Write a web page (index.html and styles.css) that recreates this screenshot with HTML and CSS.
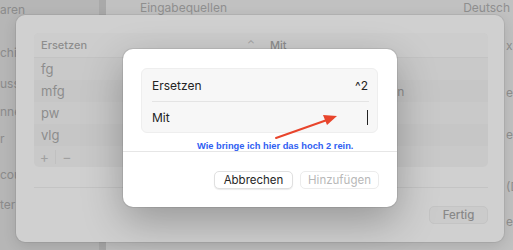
FILE: index.html
```html
<!DOCTYPE html>
<html lang="de">
<head>
    <meta charset="UTF-8">
    <title>Textersetzungen</title>
    <link rel="stylesheet" href="styles.css">
</head>
<body>
    <div class="window">
        <div class="sidebar">
            <p class="s1">aren</p>
            <p class="s2">chi</p>
            <p class="s3">uss</p>
            <p class="s4">nne</p>
            <p class="s5">r</p>
            <p class="s6">cou</p>
            <p class="s7">ter</p>
        </div>
        <div class="content">
            <div class="topline">
                <span>Eingabequellen</span>
                <span>Deutsch</span>
            </div>
            <div class="edge">
                <p class="e1">x</p>
                <p class="e2">en</p>
                <p class="e3">er</p>
                <p class="e4">(D</p>
                <p class="e5">er</p>
            </div>
        </div>
    </div>

    <div class="sheet">
        <div class="table">
            <div class="thead">
                <div class="col1">Ersetzen <span class="sort">&#8963;</span></div>
                <div class="col2">Mit</div>
            </div>
            <div class="row"><div class="col1">fg</div><div class="col2">Freundliche Grüße</div></div>
            <div class="row odd"><div class="col1">mfg</div><div class="col2">Mit freundlichen Grüßen</div></div>
            <div class="row"><div class="col1">pw</div><div class="col2">Passwort</div></div>
            <div class="row odd"><div class="col1">vlg</div><div class="col2">Viele Grüße</div></div>
            <div class="tfoot">
                <span class="tool">+</span>
                <span class="tool minus">&minus;</span>
            </div>
        </div>
        <div class="sheet-actions">
            <button class="btn dim">Fertig</button>
        </div>
    </div>

    <div class="dialog">
        <div class="fields">
            <div class="field">
                <span>Ersetzen</span>
                <span>^2</span>
            </div>
            <div class="field">
                <span>Mit</span>
                <span class="caret"></span>
            </div>
        </div>
        <div class="note">Wie bringe ich hier das hoch 2 rein.</div>
        <div class="actions">
            <button class="btn">Abbrechen</button>
            <button class="btn off">Hinzufügen</button>
        </div>
    </div>

    <svg class="arrow" width="513" height="250" viewBox="0 0 513 250">
        <line x1="276" y1="138" x2="327" y2="120" stroke="#e8452c" stroke-width="2" stroke-linecap="round" />
        <polygon points="337,116 323,115 327,125" fill="#e8452c" />
    </svg>
</body>
</html>
```

FILE: styles.css
```css
* {
    padding: 0;
    margin: 0;
    box-sizing: border-box;
}

body {
    width: 513px;
    height: 250px;
    overflow: hidden;
    position: relative;
    background-color: #bdbdbd;
    font-family: Inter, "Liberation Sans", sans-serif;
}

/* Fenster dahinter */

.window {
    display: grid;
    grid-template-columns: 106px 1fr;
    height: 250px;
}

.sidebar {
    background-color: #b6b6b6;
    border-right: 7px solid #a9a9a9;
    color: #8b8b8b;
    font-size: 12px;
}

.sidebar p {
    line-height: 14px;
}

.s1 { margin-top: 3px; }
.s2 { margin-top: 29px; }
.s3 { margin-top: 17px; }
.s4 { margin-top: 14px; }
.s5 { margin-top: 13px; }
.s6 { margin-top: 22px; }
.s7 { margin-top: 16px; }

.content {
    position: relative;
    background-color: #c1c1c1;
    color: #8f8f8f;
    font-size: 12px;
}

.topline {
    display: flex;
    justify-content: space-between;
    padding: 1px 3px 0 34px;
    line-height: 14px;
}

.edge {
    display: flex;
    flex-direction: column;
    align-items: flex-end;
}

.edge p {
    line-height: 14px;
    width: 7px;
    overflow: hidden;
    white-space: nowrap;
}

.e1 { margin-top: 24px; }
.e2 { margin-top: 33px; }
.e3 { margin-top: 28px; }
.e4 { margin-top: 38px; }
.e5 { margin-top: 21px; }

/* Sheet */

.sheet {
    position: absolute;
    left: 16px;
    top: 15px;
    width: 488px;
    height: 227px;
    background-color: #d0d0d0;
    border-radius: 9px;
    box-shadow: 0 0 0 1px rgba(0, 0, 0, 0.06), 0 4px 14px rgba(0, 0, 0, 0.12);
    padding: 18px 16px 0 18px;
    color: #8d8d8d;
}

.table {
    background-color: #c9c9c9;
    border-radius: 5px;
    height: 134px;
    overflow: hidden;
}

.thead,
.row {
    display: flex;
    align-items: center;
}

.thead {
    height: 25px;
    background-color: #cdcdcd;
    font-size: 11px;
    font-weight: 500;
    border-bottom: 1px solid #c3c3c3;
}

.row {
    height: 22px;
    font-size: 13px;
}

.row .col2 {
    font-size: 12px;
    letter-spacing: -0.15px;
}

.row.odd {
    background-color: #c6c6c6;
}

.col1 {
    width: 229px;
    padding-left: 7px;
    display: flex;
    justify-content: space-between;
    padding-right: 8px;
}

.col2 {
    padding-left: 7px;
}

.sort {
    font-size: 10px;
    color: #a2a2a2;
}

.tfoot {
    display: flex;
    height: 21px;
    align-items: center;
    font-size: 14px;
    color: #a0a0a0;
}

.tool {
    width: 22px;
    text-align: center;
    border-right: 1px solid #c0c0c0;
    line-height: 14px;
}

.minus {
    border-right: none;
}

.sheet-actions {
    margin-top: 20px;
    border-top: 1px solid #c4c4c4;
    padding-top: 18px;
    display: flex;
    justify-content: flex-end;
}

/* Dialog */

.dialog {
    position: absolute;
    left: 123px;
    top: 49px;
    width: 274px;
    height: 158px;
    background-color: #ffffff;
    border-radius: 10px;
    box-shadow: 0 0 0 1px rgba(0, 0, 0, 0.08), 0 14px 40px rgba(0, 0, 0, 0.28);
    padding-top: 19px;
    color: #232323;
}

.fields {
    margin: 0 19px 0 18px;
    background-color: #f7f7f7;
    border: 1px solid #eeeeee;
    border-radius: 6px;
    height: 65px;
}

.field {
    height: 32px;
    display: flex;
    justify-content: space-between;
    align-items: center;
    padding: 0 9px 0 10px;
    font-size: 12px;
}

.field + .field {
    margin: 0 8px 0 10px;
    padding: 0 1px 0 0;
    border-top: 1px solid #e4e4e4;
}

.caret {
    width: 1px;
    height: 15px;
    background-color: #222;
}

.note {
    height: 19px;
    display: flex;
    align-items: flex-end;
    padding-left: 74px;
    border-bottom: 1px solid #e6e6e6;
    color: #2f5ef2;
    font-family: "Liberation Sans", Arial, sans-serif;
    font-size: 9.3px;
    font-weight: bold;
    line-height: 9px;
}

.actions {
    display: flex;
    justify-content: flex-end;
    gap: 7px;
    margin-top: 19px;
    padding-right: 18px;
}

.btn {
    height: 18px;
    width: 79px;
    padding: 0;
    background-color: #ffffff;
    border: 1px solid #e0e0e0;
    border-radius: 5px;
    box-shadow: 0 1px 1px rgba(0, 0, 0, 0.08);
    font-family: Inter, "Liberation Sans", sans-serif;
    font-size: 11.5px;
    color: #262626;
}

.btn.off {
    color: #b8b8b8;
    box-shadow: none;
    border-color: #ececec;
}

.btn.dim {
    width: 59px;
    background-color: #cbcbcb;
    border-color: #c4c4c4;
    color: #888;
    box-shadow: none;
    font-weight: 500;
}

.arrow {
    position: absolute;
    left: 0;
    top: 0;
}
```
